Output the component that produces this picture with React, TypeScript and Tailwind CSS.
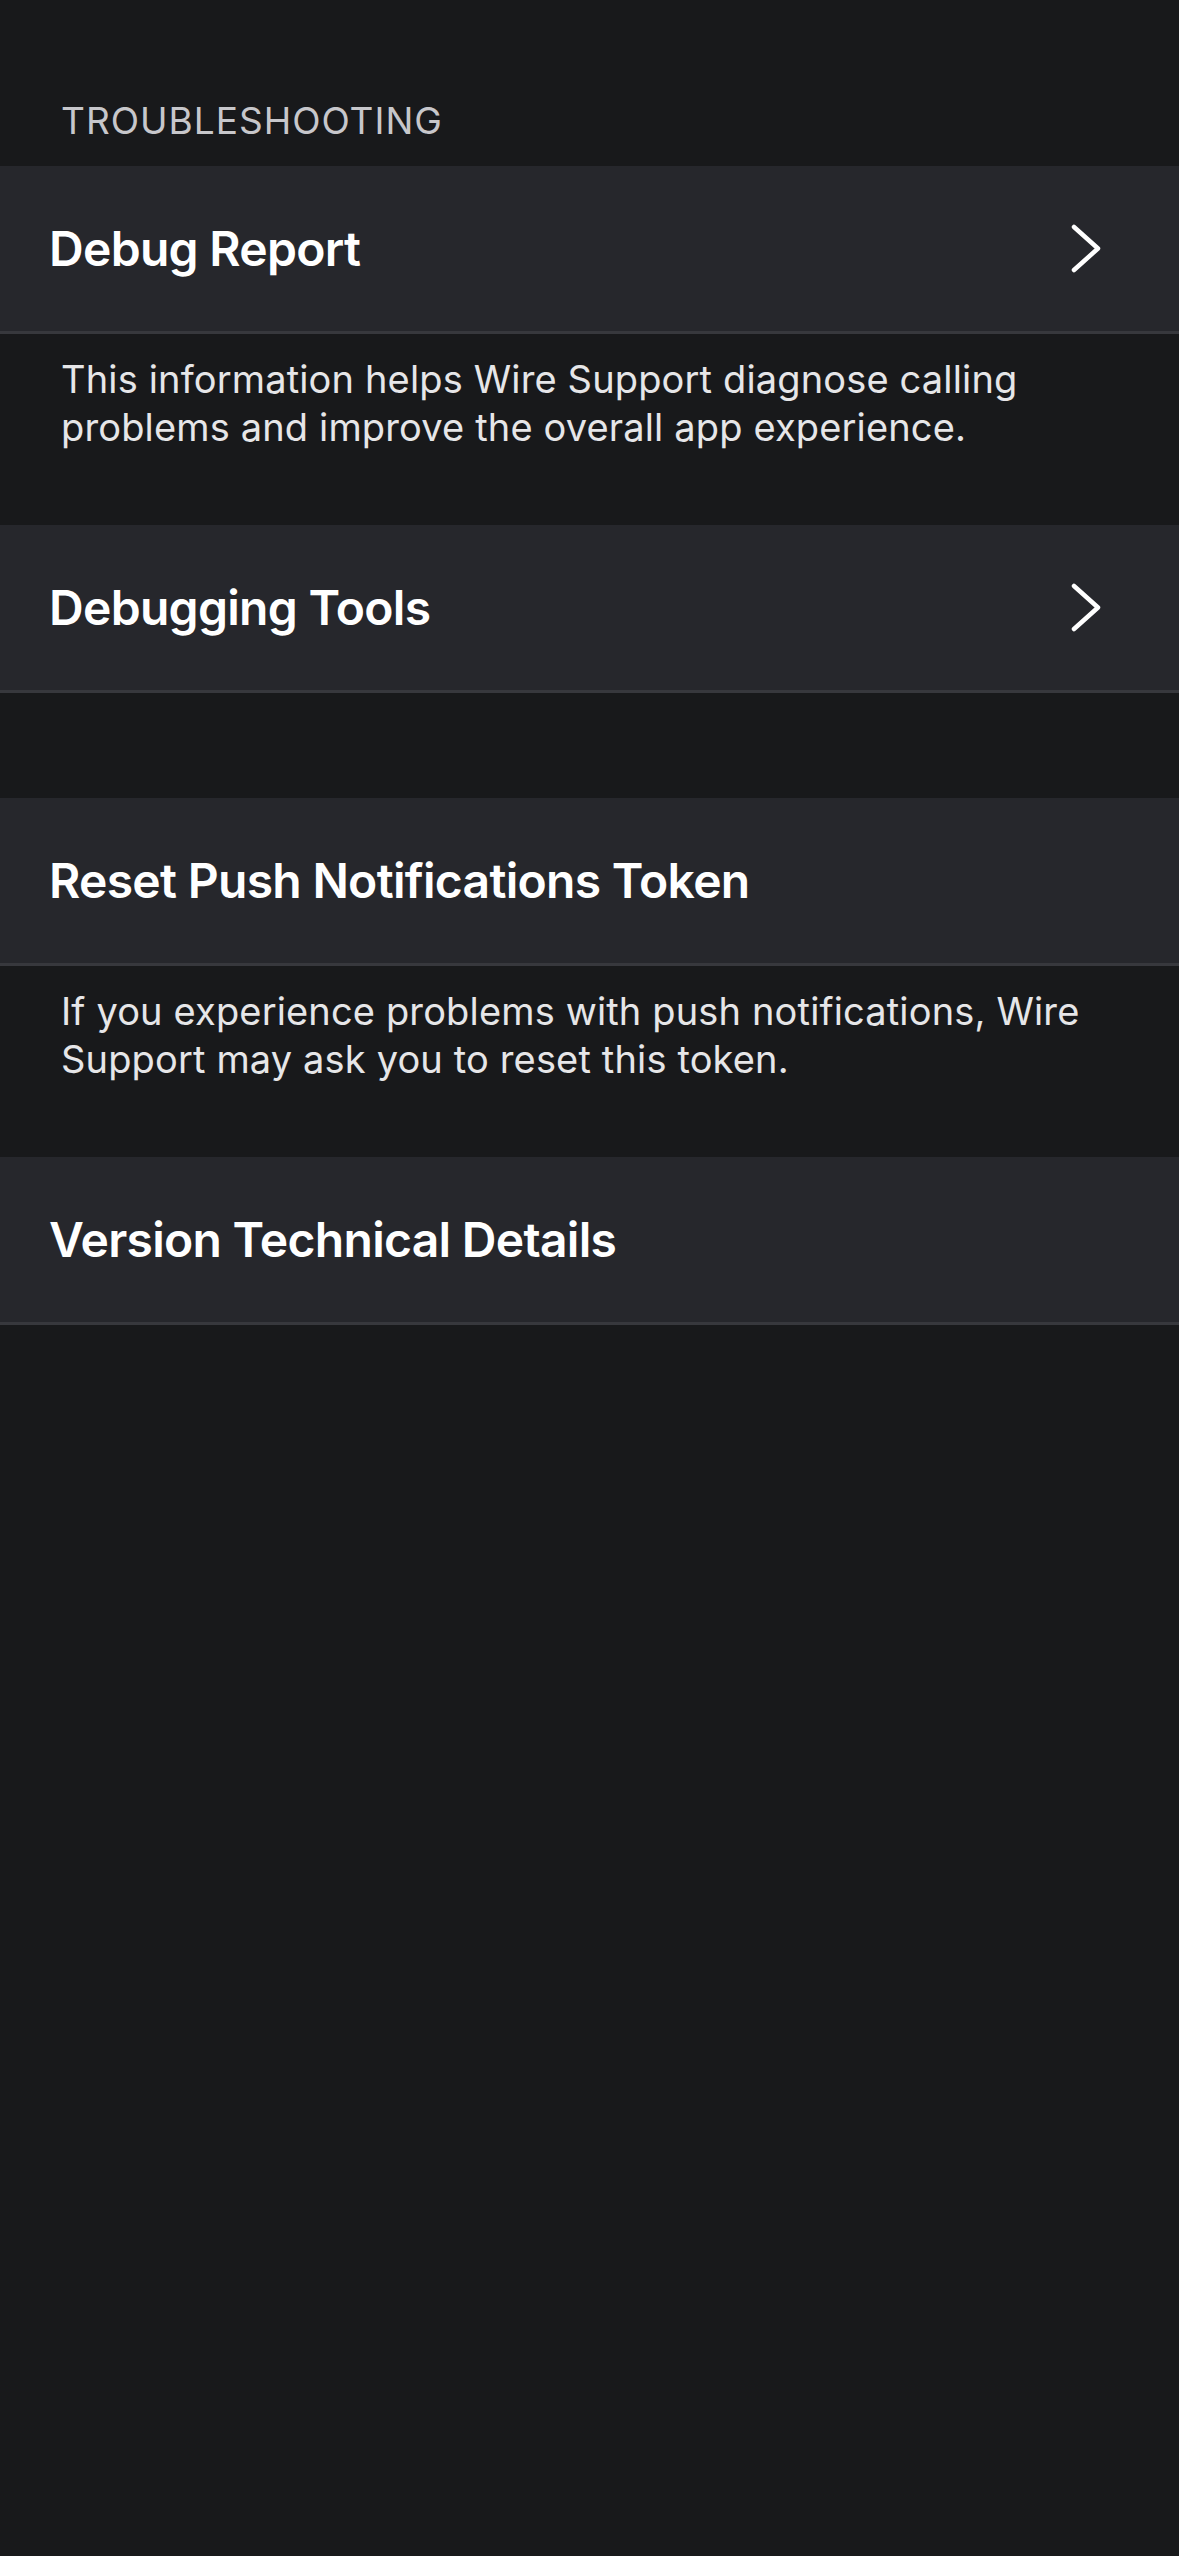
import React from 'react';

const font = { fontFamily: 'Inter, "Noto Sans", sans-serif' };

function Chevron() {
  return (
    <svg width="30" height="49" viewBox="0 0 30 49" fill="none" className="shrink-0">
      <polyline
        points="3,3 27,24.5 3,46"
        stroke="#ffffff"
        strokeWidth="4.5"
        strokeLinecap="round"
        strokeLinejoin="round"
      />
    </svg>
  );
}

function Row({ title, chevron }: { title: string; chevron?: boolean }) {
  return (
    <div className="flex h-[168px] items-center justify-between border-b-[3px] border-[#37383d] bg-[#26272c] pl-[49px] pr-[78px]">
      <span className="text-[48px] font-semibold leading-none tracking-[-0.7px] text-white">{title}</span>
      {chevron && <Chevron />}
    </div>
  );
}

function Footer({ children }: { children: React.ReactNode }) {
  return (
    <div className="pt-[21px] pb-[74px] pl-[61px] pr-[60px] text-[38px] leading-[48px] tracking-[0.15px] text-[#e6e6e8]">
      {children}
    </div>
  );
}

export default function App() {
  return (
    <div className="min-h-[2556px] w-full bg-[#18191b]" style={font}>
      <div className="pt-[98px] pb-[22px] pl-[61px] text-[37px] leading-[46px] tracking-[1px] text-[#c7c7cb]">
        TROUBLESHOOTING
      </div>
      <Row title="Debug Report" chevron />
      <Footer>
        This information helps Wire Support diagnose calling problems and improve the overall app experience.
      </Footer>
      <Row title="Debugging Tools" chevron />
      <div className="h-[105px]" />
      <Row title="Reset Push Notifications Token" />
      <Footer>
        If you experience problems with push notifications, Wire Support may ask you to reset this token.
      </Footer>
      <Row title="Version Technical Details" />
    </div>
  );
}
